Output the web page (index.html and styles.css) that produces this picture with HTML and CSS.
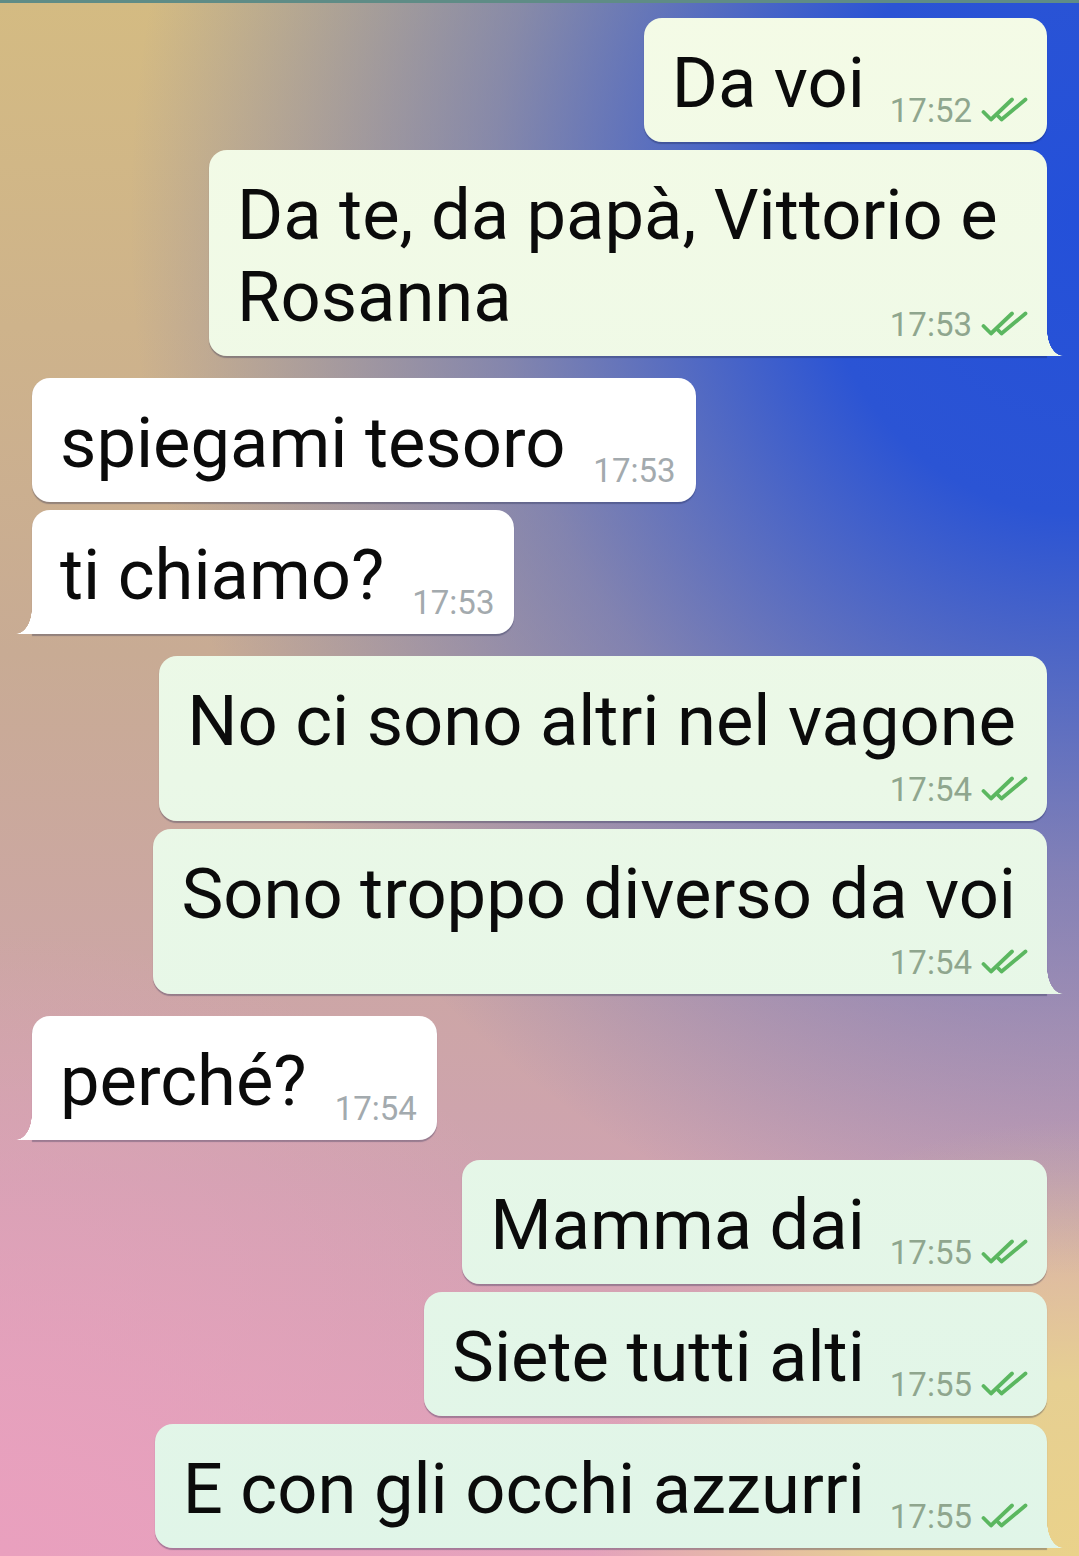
FILE: index.html
```html
<!DOCTYPE html>
<html lang="it">
<head>
    <meta charset="UTF-8">
    <meta name="viewport" content="width=device-width, initial-scale=1.0">
    <title>Chat</title>
    <link rel="stylesheet" href="styles.css">
</head>
<body>
    <main class="chat">
        <div class="group out">
            <div class="bubble">
                <span class="text">Da voi</span>
                <span class="meta"><span class="time">17:52</span><svg class="ticks" viewBox="0 0 47 26"><path d="M2.5 15 L10 22.5 L31 2.5"/><path d="M17 19 L20.5 22.5 L44.5 2.5"/></svg></span>
            </div>
            <div class="bubble tail narrow">
                <span class="text">Da te, da papà, Vittorio e Rosanna</span>
                <span class="meta"><span class="time">17:53</span><svg class="ticks" viewBox="0 0 47 26"><path d="M2.5 15 L10 22.5 L31 2.5"/><path d="M17 19 L20.5 22.5 L44.5 2.5"/></svg></span>
            </div>
        </div>

        <div class="group in">
            <div class="bubble">
                <span class="text">spiegami tesoro</span>
                <span class="meta"><span class="time">17:53</span></span>
            </div>
            <div class="bubble tail">
                <span class="text">ti chiamo?</span>
                <span class="meta"><span class="time">17:53</span></span>
            </div>
        </div>

        <div class="group out">
            <div class="bubble below">
                <span class="text">No ci sono altri nel vagone</span>
                <span class="meta"><span class="time">17:54</span><svg class="ticks" viewBox="0 0 47 26"><path d="M2.5 15 L10 22.5 L31 2.5"/><path d="M17 19 L20.5 22.5 L44.5 2.5"/></svg></span>
            </div>
            <div class="bubble below tail">
                <span class="text">Sono troppo diverso da voi</span>
                <span class="meta"><span class="time">17:54</span><svg class="ticks" viewBox="0 0 47 26"><path d="M2.5 15 L10 22.5 L31 2.5"/><path d="M17 19 L20.5 22.5 L44.5 2.5"/></svg></span>
            </div>
        </div>

        <div class="group in">
            <div class="bubble tail">
                <span class="text">perché?</span>
                <span class="meta"><span class="time">17:54</span></span>
            </div>
        </div>

        <div class="group out last">
            <div class="bubble">
                <span class="text">Mamma dai</span>
                <span class="meta"><span class="time">17:55</span><svg class="ticks" viewBox="0 0 47 26"><path d="M2.5 15 L10 22.5 L31 2.5"/><path d="M17 19 L20.5 22.5 L44.5 2.5"/></svg></span>
            </div>
            <div class="bubble">
                <span class="text">Siete tutti alti</span>
                <span class="meta"><span class="time">17:55</span><svg class="ticks" viewBox="0 0 47 26"><path d="M2.5 15 L10 22.5 L31 2.5"/><path d="M17 19 L20.5 22.5 L44.5 2.5"/></svg></span>
            </div>
            <div class="bubble tail">
                <span class="text">E con gli occhi azzurri</span>
                <span class="meta"><span class="time">17:55</span><svg class="ticks" viewBox="0 0 47 26"><path d="M2.5 15 L10 22.5 L31 2.5"/><path d="M17 19 L20.5 22.5 L44.5 2.5"/></svg></span>
            </div>
        </div>
    </main>
</body>
</html>
```

FILE: styles.css
```css
:root {
    --out-top: #f4fbe6;
    --out-bottom: #e0f5e8;
    --in-bg: #ffffff;
    --text: #0b0b0b;
    --time-out: #8fa68e;
    --time-in: #a3aaae;
    --tick: #5bb760;
}

* {
    margin: 0;
    padding: 0;
    box-sizing: border-box;
}

html,
body {
    height: 100%;
}

body {
    font-family: Roboto, 'Noto Sans', sans-serif;
    color: var(--text);
    border-top: 3px solid #5f8c86;
    overflow: hidden;
    background-color: #c9a9a0;
    background-image:
        radial-gradient(ellipse 88% 68% at 100% 14%, #2450d9 0%, #2b54d4 28%, rgba(60, 90, 205, 0.5) 62%, rgba(70, 95, 200, 0) 100%),
        radial-gradient(ellipse 45% 28% at 100% 100%, #ead28a 0%, #e6cf92 40%, rgba(230, 207, 146, 0) 100%),
        radial-gradient(ellipse 60% 40% at 0% 100%, #e9a0be 0%, rgba(233, 160, 190, 0) 100%),
        linear-gradient(180deg, #d4bb82 0%, #c8ab94 42%, #cfa3b0 76%, #e4a2bc 100%);
}

.chat {
    display: flex;
    flex-direction: column;
    gap: 22px;
    padding: 15px 32px 0;
}

.chat .group.last {
    margin-top: -2px;
}

/* Groups */
.group {
    display: flex;
    flex-direction: column;
    gap: 8px;
}

.group.out {
    align-items: flex-end;
}

.group.in {
    align-items: flex-start;
}

/* Bubbles */
.bubble {
    position: relative;
    display: flow-root;
    width: fit-content;
    max-width: 900px;
    padding: 24px 19px 15px 28px;
    border-radius: 18px;
    font-size: 70.5px;
    line-height: 82px;
    box-shadow: 0 1.5px 1px rgba(20, 30, 70, 0.3);
}

.group.out .bubble {
    background: linear-gradient(180deg, var(--out-top) 0%, var(--out-bottom) 100%) fixed;
}

.group.in .bubble {
    background: var(--in-bg);
    padding-right: 20px;
}

.bubble.narrow {
    max-width: 838px;
}

.meta {
    float: right;
    margin: 53px 0 0 25px;
    font-size: 33px;
    line-height: 32px;
    white-space: nowrap;
}

.group.in .meta {
    margin-left: 28px;
}

.group.out .time {
    color: var(--time-out);
}

.group.in .time {
    color: var(--time-in);
}

.ticks {
    width: 47px;
    height: 26px;
    margin-left: 9px;
    vertical-align: -1px;
    fill: none;
    stroke: var(--tick);
    stroke-width: 3.8;
    stroke-linecap: round;
    stroke-linejoin: round;
}

/* Time on its own row */
.bubble.below .text {
    display: block;
    padding-right: 12px;
}

.bubble.below .meta {
    float: none;
    display: block;
    text-align: right;
    margin: 12px 0 0;
}

/* Tails on the last bubble of a group */
.group.out .bubble.tail {
    border-bottom-right-radius: 0;
}

.group.in .bubble.tail {
    border-bottom-left-radius: 0;
}

.bubble.tail::after {
    content: '';
    position: absolute;
    bottom: 0;
    width: 16px;
    height: 26px;
    background: inherit;
}

.group.out .bubble.tail::after {
    right: -16px;
    -webkit-mask: radial-gradient(ellipse 16px 26px at 100% 0, transparent 98%, #000 100%);
    mask: radial-gradient(ellipse 16px 26px at 100% 0, transparent 98%, #000 100%);
}

.group.in .bubble.tail::after {
    left: -16px;
    -webkit-mask: radial-gradient(ellipse 16px 26px at 0 0, transparent 98%, #000 100%);
    mask: radial-gradient(ellipse 16px 26px at 0 0, transparent 98%, #000 100%);
}
```
